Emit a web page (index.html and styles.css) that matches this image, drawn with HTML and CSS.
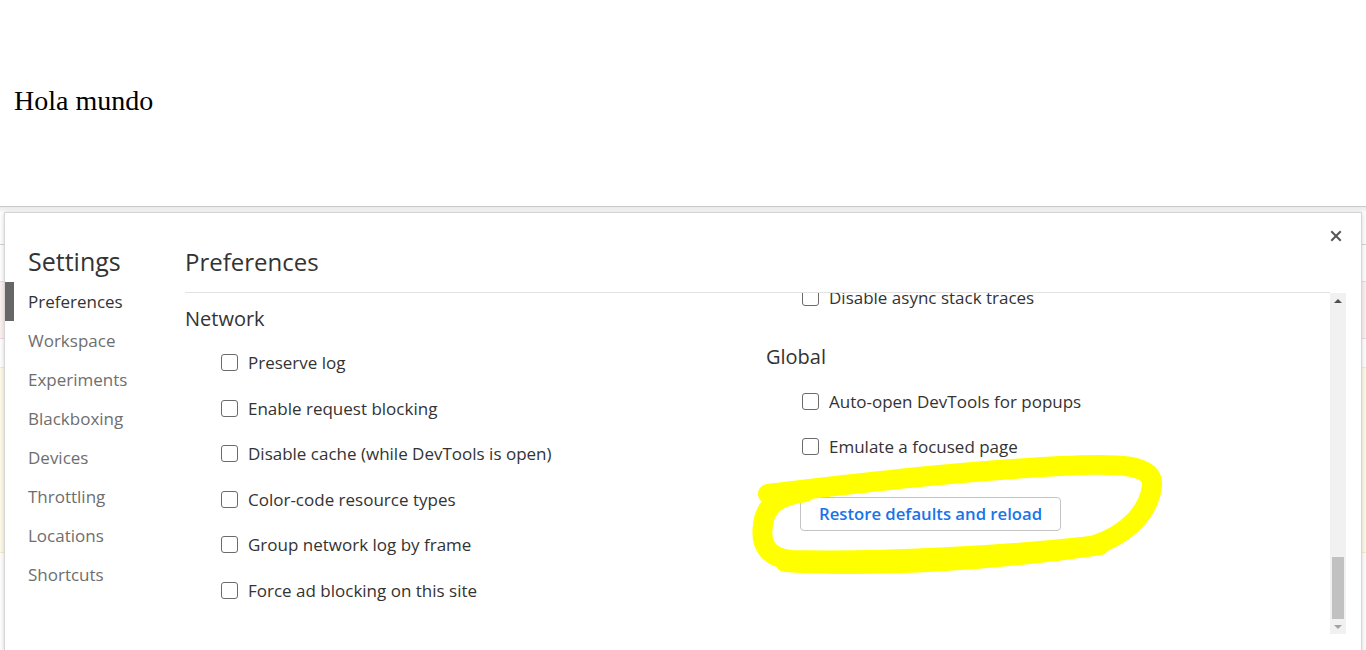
FILE: index.html
```html
<!DOCTYPE html>
<html lang="es">
<head>
<meta charset="utf-8">
<title>Hola mundo</title>
<link rel="stylesheet" href="styles.css">
</head>
<body>
  <div class="page">
    <p class="hello">Hola mundo</p>
  </div>

  <div class="devtools">
    <div class="dt-toolbar"></div>
    <div class="dt-spacer"></div>
    <div class="dt-error"></div>
    <div class="dt-spacer2"></div>
    <div class="dt-warning"></div>
  </div>

  <div class="dialog">
    <aside class="sidebar">
      <h1 class="sidebar-title">Settings</h1>
      <nav class="tabs">
        <div class="tab selected">Preferences</div>
        <div class="tab">Workspace</div>
        <div class="tab">Experiments</div>
        <div class="tab">Blackboxing</div>
        <div class="tab">Devices</div>
        <div class="tab">Throttling</div>
        <div class="tab">Locations</div>
        <div class="tab">Shortcuts</div>
      </nav>
    </aside>

    <main class="main">
      <h2 class="main-title">Preferences</h2>
      <div class="scroll-row">
        <div class="scroll-content">
          <section class="col col-left">
            <h3 class="section-title">Network</h3>
            <label class="option"><span class="checkbox"></span>Preserve log</label>
            <label class="option"><span class="checkbox"></span>Enable request blocking</label>
            <label class="option"><span class="checkbox"></span>Disable cache (while DevTools is open)</label>
            <label class="option"><span class="checkbox"></span>Color-code resource types</label>
            <label class="option"><span class="checkbox"></span>Group network log by frame</label>
            <label class="option"><span class="checkbox"></span>Force ad blocking on this site</label>
          </section>
          <section class="col col-right">
            <label class="option option-clipped"><span class="checkbox"></span>Disable async stack traces</label>
            <h3 class="section-title section-title-spaced">Global</h3>
            <label class="option"><span class="checkbox"></span>Auto-open DevTools for popups</label>
            <label class="option"><span class="checkbox"></span>Emulate a focused page</label>
            <button class="restore-btn" type="button">Restore defaults and reload</button>
          </section>
        </div>
        <div class="scrollbar">
          <div class="sb-btn sb-up"><span class="arrow-up"></span></div>
          <div class="sb-track"><div class="sb-thumb"></div></div>
          <div class="sb-btn sb-down"><span class="arrow-down"></span></div>
        </div>
      </div>
    </main>

    <button class="close-btn" type="button" aria-label="Close">
      <svg width="12" height="12" viewBox="0 0 12 12"><path d="M2 2 L10 10 M10 2 L2 10" stroke="#555" stroke-width="2" stroke-linecap="square" fill="none"/></svg>
    </button>
  </div>

  <svg class="highlight" width="1366" height="650" viewBox="0 0 1366 650">
    <path d="M768 494 C 850 484, 950 472, 1060 466 C 1120 463, 1154 464, 1152 486 C 1149 510, 1130 534, 1092 546 C 1000 556, 880 562, 792 560 C 768 558, 760 545, 763 525 C 765 505, 778 496, 805 492" stroke="#ffff00" stroke-width="20" stroke-linecap="round" stroke-linejoin="round" fill="none"/>
    <path d="M785 562 C 880 568, 1000 560, 1100 545" stroke="#ffff00" stroke-width="20" stroke-linecap="round" fill="none"/>
  </svg>
</body>
</html>
```

FILE: styles.css
```css
html, body {
  margin: 0;
  padding: 0;
}

body {
  width: 1366px;
  height: 650px;
  overflow: hidden;
  position: relative;
  background: #fff;
  font-family: "Open Sans", "Noto Sans", sans-serif;
  color: #333;
}

.page {
  height: 206px;
  box-sizing: border-box;
  padding: 85px 0 0 14px;
}

.hello {
  margin: 0;
  font-family: "Liberation Serif", serif;
  font-size: 28px;
  line-height: normal;
  color: #000;
}

/* Backdrop: devtools panel behind the dialog */
.devtools {
  border-top: 1px solid #c9c9c9;
}

.dt-toolbar {
  height: 37px;
  background: linear-gradient(#e9e9e9, #fff 6px);
  border-bottom: 1px solid #d3d3d3;
}

.dt-spacer {
  height: 36px;
}

.dt-error {
  height: 56px;
  background: #fdf2f2;
  border-top: 1px solid #f3dada;
  border-bottom: 1px solid #f3dada;
}

.dt-spacer2 {
  height: 28px;
}

.dt-warning {
  height: 184px;
  background: #fffbea;
  border-top: 1px solid #f7eec8;
  border-bottom: 1px solid #f7eec8;
}

/* Settings dialog */
.dialog {
  position: absolute;
  left: 4px;
  top: 212px;
  width: 1358px;
  height: 460px;
  box-sizing: border-box;
  border: 1px solid #d6d6d6;
  background: #fff;
  box-shadow: 0 1px 5px rgba(0, 0, 0, 0.18);
  display: flex;
}

.sidebar {
  width: 180px;
  flex: none;
  padding-top: 32px;
}

.sidebar-title {
  margin: 0 0 5px 23px;
  font-size: 25px;
  line-height: 32px;
  font-weight: 400;
  color: #333;
}

.tab {
  height: 39px;
  display: flex;
  align-items: center;
  padding-left: 14px;
  border-left: 9px solid transparent;
  font-size: 17px;
  color: #6e6e6e;
}

.tab.selected {
  border-left-color: #666;
  color: #333;
}

.main {
  flex: 1;
  min-width: 0;
  padding-top: 33px;
  padding-right: 15px;
  display: flex;
  flex-direction: column;
}

.main-title {
  margin: 0 16px 0 0;
  padding-bottom: 14px;
  border-bottom: 1px solid #e3e3e3;
  font-size: 24px;
  line-height: 32px;
  font-weight: 400;
  color: #333;
}

.scroll-row {
  display: flex;
  flex: 1;
  min-height: 0;
}

.scroll-content {
  flex: 1;
  display: flex;
  overflow: hidden;
}

.col-left {
  width: 581px;
  flex: none;
  padding-top: 12px;
}

.col-right {
  flex: 1;
}

.section-title {
  margin: 0 0 7px;
  font-size: 20px;
  line-height: 28px;
  font-weight: 400;
  color: #333;
}

.section-title-spaced {
  margin-top: 22px;
  margin-bottom: 8px;
}

.option {
  height: 45.5px;
  display: flex;
  align-items: center;
  gap: 10px;
  padding-left: 36px;
  font-size: 17px;
  color: #333;
}

.option-clipped {
  margin-top: -18px;
}

.checkbox {
  width: 17px;
  height: 17px;
  box-sizing: border-box;
  border: 1px solid #6b6b6b;
  border-radius: 3px;
  flex: none;
  background: #fff;
}

.restore-btn {
  margin: 27px 0 0 34px;
  height: 34px;
  padding: 0 18px;
  border: 1px solid #c4c4c4;
  border-radius: 4px;
  background: #fff;
  color: #1a73e8;
  font-family: "Open Sans", "Noto Sans", sans-serif;
  font-size: 16.7px;
  font-weight: 600;
}

/* Fake scrollbar */
.scrollbar {
  width: 16px;
  height: 341px;
  flex: none;
  background: #f1f1f1;
  display: flex;
  flex-direction: column;
}

.sb-btn {
  height: 15px;
  display: flex;
  align-items: center;
  justify-content: center;
}

.arrow-up {
  width: 0;
  height: 0;
  border-left: 4px solid transparent;
  border-right: 4px solid transparent;
  border-bottom: 4px solid #505050;
}

.arrow-down {
  width: 0;
  height: 0;
  border-left: 4px solid transparent;
  border-right: 4px solid transparent;
  border-top: 4px solid #a3a3a3;
}

.sb-track {
  flex: 1;
  display: flex;
  flex-direction: column;
  justify-content: flex-end;
}

.sb-thumb {
  height: 62px;
  margin: 0 2px;
  background: #c1c1c1;
}

.close-btn {
  position: absolute;
  top: 16px;
  right: 18px;
  width: 14px;
  height: 14px;
  padding: 0;
  border: 0;
  background: transparent;
  display: flex;
  align-items: center;
  justify-content: center;
}

.highlight {
  position: absolute;
  left: 0;
  top: 0;
  pointer-events: none;
}
```
